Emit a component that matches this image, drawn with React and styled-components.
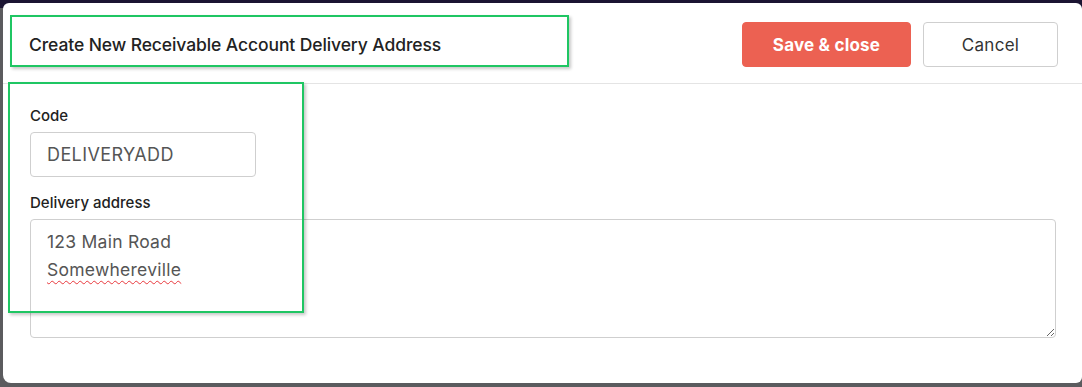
import styled, { createGlobalStyle } from 'styled-components';

const GlobalStyle = createGlobalStyle`
  html, body {
    margin: 0;
    padding: 0;
  }
  body {
    font-family: Inter, "Noto Sans", sans-serif;
    background: #5b5b5e;
  }
`;

const Backdrop = styled.div`
  width: 1082px;
  height: 387px;
  box-sizing: border-box;
  padding: 3px 0 4px 3px;
  background: linear-gradient(to bottom, #1b1432 0 8px, #5b5b5e 8px);
  position: relative;
  overflow: hidden;
`;

const Modal = styled.div`
  height: 100%;
  background: #fff;
  border-radius: 6px 6px 6px 8px;
  display: flex;
  flex-direction: column;
`;

const Header = styled.div`
  height: 81px;
  box-sizing: border-box;
  display: flex;
  align-items: center;
  justify-content: space-between;
  padding: 3px 24px 0 26px;
  border-bottom: 1px solid #e4e4e4;
`;

const Title = styled.h2`
  margin: 0;
  font-size: 17.5px;
  font-weight: 500;
  color: #222;
  letter-spacing: -0.1px;
`;

const Actions = styled.div`
  display: flex;
  gap: 12px;
`;

const Button = styled.button`
  height: 45px;
  box-sizing: border-box;
  padding: 0;
  width: ${(p) => (p.$primary ? '169px' : '135px')};
  border-radius: 4px;
  font-family: inherit;
  font-size: 17px;
  font-weight: ${(p) => (p.$primary ? 700 : 400)};
  letter-spacing: ${(p) => (p.$primary ? '0.2px' : '0.3px')};
  color: ${(p) => (p.$primary ? '#fff' : '#333')};
  background: ${(p) => (p.$primary ? '#ec6152' : '#fff')};
  border: 1px solid ${(p) => (p.$primary ? '#ec6152' : '#cfcfcf')};
  cursor: pointer;
`;

const Body = styled.div`
  padding: 23px 26px 0 27px;
  display: flex;
  flex-direction: column;
`;

const Label = styled.label`
  font-size: 15px;
  font-weight: 500;
  color: #222;
  line-height: 18px;
  margin-bottom: 7px;
`;

const Field = styled.div`
  display: flex;
  flex-direction: column;
  margin-bottom: 17px;
`;

const Input = styled.input`
  width: 226px;
  height: 45px;
  box-sizing: border-box;
  border: 1px solid #cfcfcf;
  border-radius: 4px;
  padding: 0 16px;
  font-family: inherit;
  font-size: 18px;
  letter-spacing: 0.4px;
  color: #555;
  outline: none;
`;

const TextArea = styled.div`
  height: 119px;
  box-sizing: border-box;
  border: 1px solid #cfcfcf;
  border-radius: 4px;
  padding: 8px 16px;
  font-size: 17.5px;
  letter-spacing: 0.25px;
  line-height: 28px;
  color: #555;
  resize: vertical;
  overflow: auto;
`;

const Misspelled = styled.span`
  text-decoration: underline wavy #e8383d;
  text-decoration-thickness: 1.2px;
  text-underline-offset: 4px;
`;

// annotation boxes drawn over the screenshot
const Marker = styled.div`
  position: absolute;
  left: ${(p) => p.$x}px;
  top: ${(p) => p.$y}px;
  width: ${(p) => p.$w}px;
  height: ${(p) => p.$h}px;
  box-sizing: border-box;
  border: 2px solid #1fc663;
  box-shadow: 2px 2px 3px rgba(0, 0, 0, 0.22);
  pointer-events: none;
`;

export default function App() {
  return (
    <>
      <GlobalStyle />
      <Backdrop>
        <Modal>
          <Header>
            <Title>Create New Receivable Account Delivery Address</Title>
            <Actions>
              <Button $primary>Save &amp; close</Button>
              <Button>Cancel</Button>
            </Actions>
          </Header>
          <Body>
            <Field>
              <Label>Code</Label>
              <Input defaultValue="DELIVERYADD" />
            </Field>
            <Field>
              <Label>Delivery address</Label>
              <TextArea role="textbox">
                123 Main Road
                <br />
                <Misspelled>Somewhereville</Misspelled>
              </TextArea>
            </Field>
          </Body>
        </Modal>
        <Marker $x={10} $y={15} $w={559} $h={52} />
        <Marker $x={8} $y={82} $w={296} $h={231} />
      </Backdrop>
    </>
  );
}
